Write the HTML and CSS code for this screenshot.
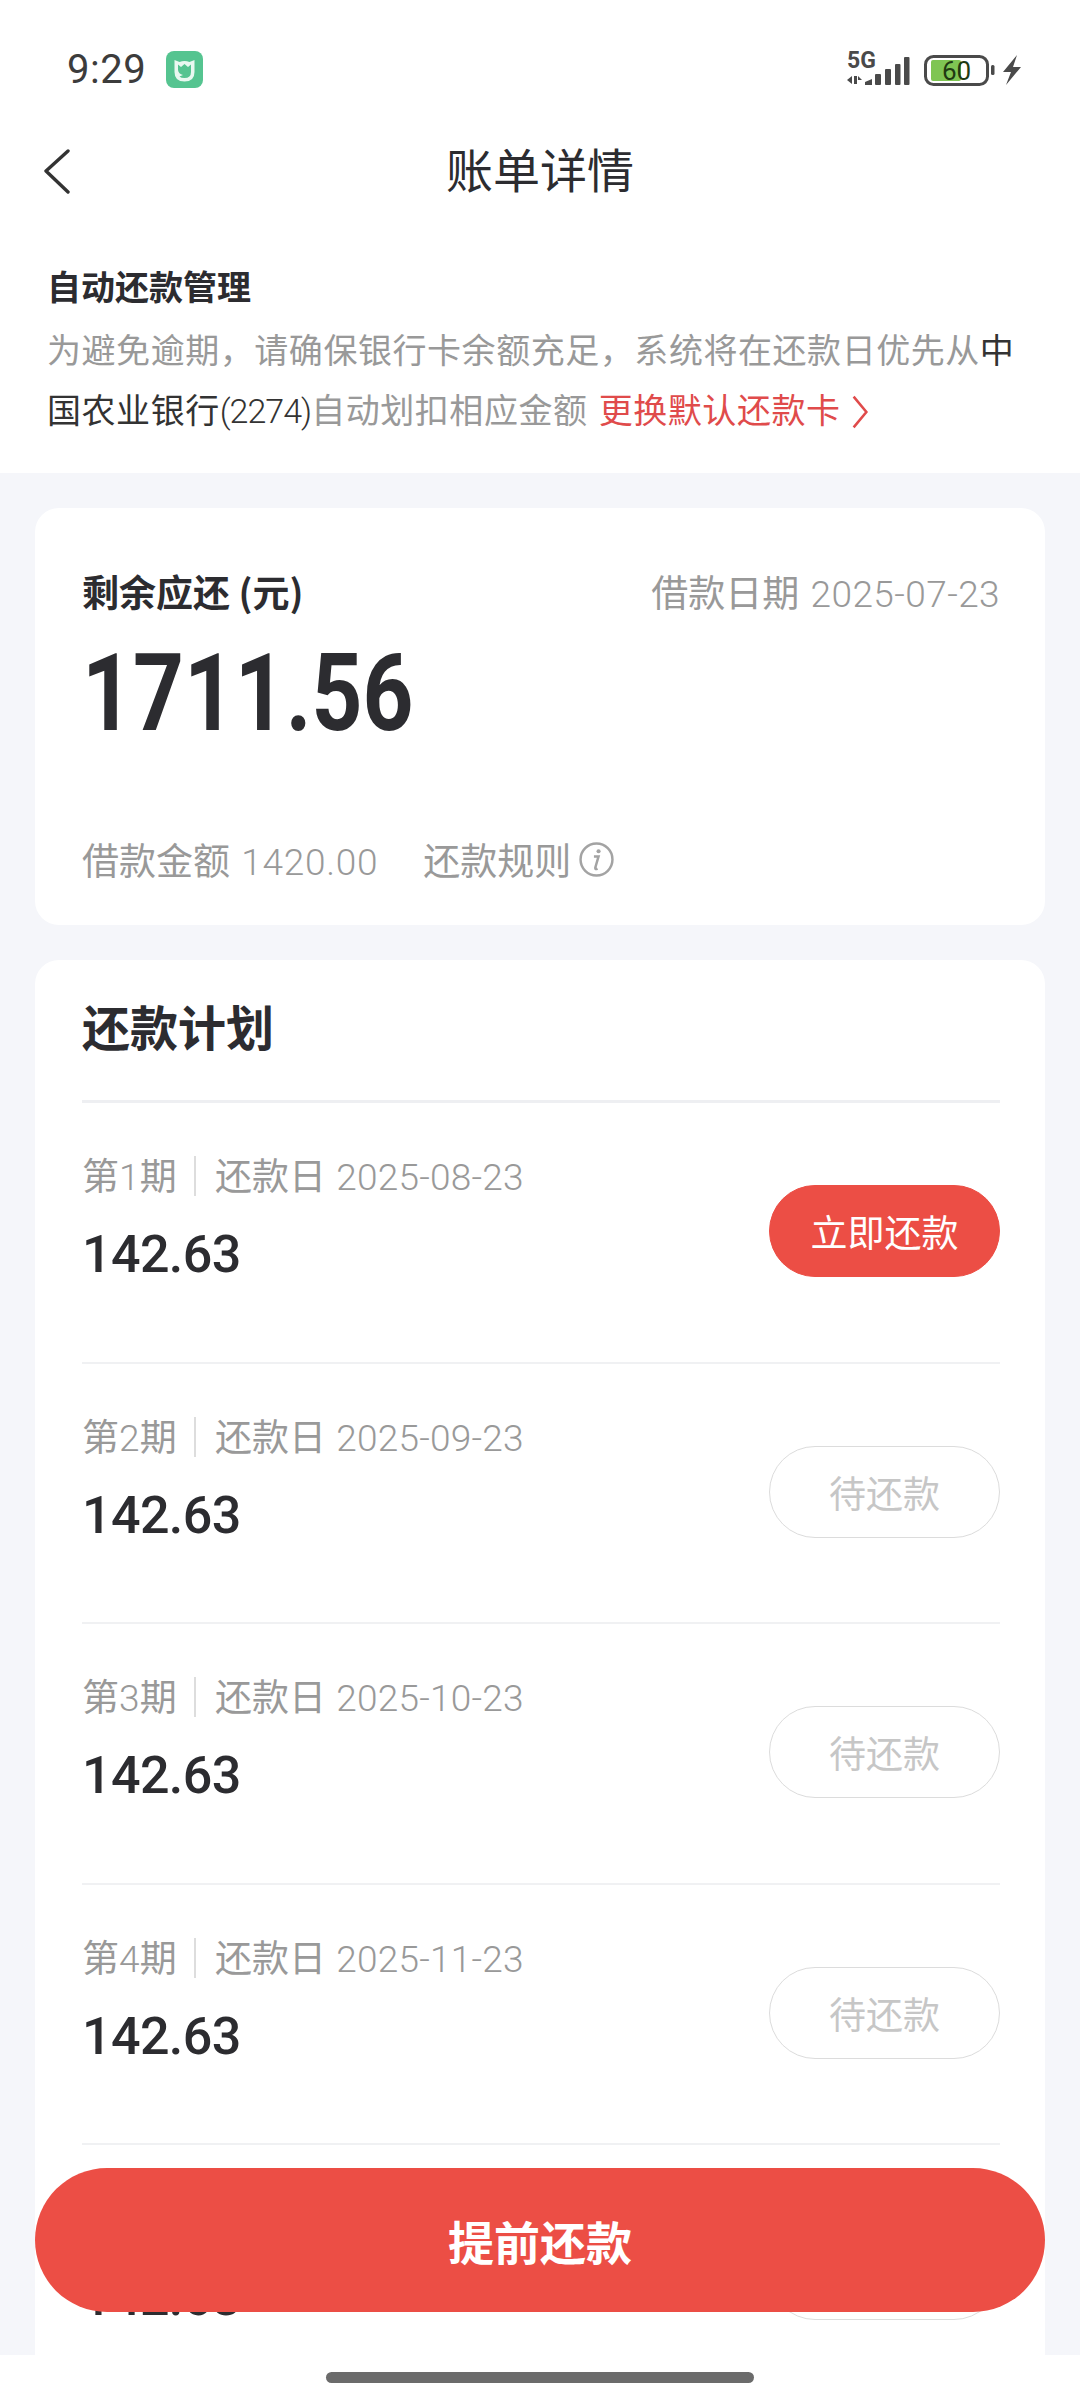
FILE: index.html
```html
<!DOCTYPE html>
<html lang="zh-CN">
<head>
<meta charset="utf-8">
<title>账单详情</title>
<link rel="stylesheet" href="styles.css">
</head>
<body>
<div class="screen">
  <header class="top">
    <div class="status">
      <div class="status-left">
        <span class="time">9:29</span>
        <svg class="app-icon" viewBox="0 0 37 37" aria-hidden="true">
          <rect width="37" height="37" rx="8" fill="#55c490"/>
          <path d="M8.500 9 L13.500 11 Q18.500 9 23.500 11 L28.500 9 V21 Q28.500 30.500 18.500 30.500 Q8.500 30.500 8.500 21 Z" fill="#e9f8f0"/>
          <path d="M12 13.500 L15 16 L18.500 13 L22 16 L25 13.500 V21 Q25 27 18.500 27 Q15 27 13.500 25.500 L17 24 Q12.500 23 12 19 Z" fill="#55c490"/>
        </svg>
      </div>
      <svg class="status-right" viewBox="0 0 190 50" aria-hidden="true">
        <text x="7" y="27" class="sb-5g">5G</text>
        <g fill="#4a4a4a">
          <path d="M7 39 L12 35 V43 Z M14 35 H17 V43 H14 Z M18 35 L22 39 H18 Z"/>
          <path d="M25 41 L32 38 V44 H25 Z"/>
          <rect x="35" y="33" width="6" height="11" rx="1"/>
          <rect x="45" y="28" width="6" height="16" rx="1"/>
          <rect x="55" y="23" width="5.500" height="21" rx="1"/>
          <rect x="64" y="16" width="5.500" height="28" rx="1"/>
        </g>
        <rect x="85.500" y="15.500" width="62" height="28" rx="8" fill="none" stroke="#4a4a4a" stroke-width="3"/>
        <rect x="91" y="19" width="30" height="21" rx="2" fill="#7fc553"/>
        <text x="102" y="39" class="sb-batt">60</text>
        <rect x="151" y="24" width="3.500" height="10" rx="1.500" fill="#4a4a4a"/>
        <path d="M177 14 L163 31 H171 L166 44 L181 26 H173 Z" fill="#4a4a4a"/>
      </svg>
    </div>
    <nav class="nav">
      <svg class="back" viewBox="0 0 26 46" aria-hidden="true"><path d="M24 2 L2 22 L24 43" fill="none" stroke="#333" stroke-width="3.400" stroke-linecap="round" stroke-linejoin="round"/></svg>
      <h1 class="nav-title">账单详情</h1>
    </nav>
    <section class="intro">
      <h2 class="intro-title">自动还款管理</h2>
      <p class="intro-text">为避免逾期，请确保银行卡余额充足，系统将在还款日优先从<span class="bank">中国农业银行<span class="bank-num">(2274)</span></span>自动划扣相应金额 <span class="change">更换默认还款卡<svg class="change-arrow" viewBox="0 0 16 32" aria-hidden="true"><path d="M2 1.500 L14 16 L2 30.500" fill="none" stroke="#e04b4b" stroke-width="2.400"/></svg></span></p>
    </section>
  </header>

  <main class="main">
    <section class="card summary">
      <div class="summary-head">
        <span class="summary-label">剩余应还 (元)</span>
        <span class="muted">借款日期 <span class="num">2025-07-23</span></span>
      </div>
      <div class="summary-amount"><span class="amount-text">1711.56</span></div>
      <div class="summary-foot">
        <span class="muted">借款金额 <span class="num num-wide">1420.00</span></span>
        <span class="muted rule">还款规则
          <svg class="info" viewBox="0 0 34 34" aria-hidden="true"><circle cx="17" cy="17" r="15.500" fill="none" stroke="#a3a3a3" stroke-width="2.400"/><circle cx="19" cy="9" r="2" fill="#a3a3a3"/><path d="M14.500 14 H19 L15.800 25 Q15.500 27 18 25.800" fill="none" stroke="#a3a3a3" stroke-width="2.400"/></svg>
        </span>
      </div>
    </section>

    <section class="card plan">
      <h2 class="plan-title">还款计划</h2>
      <div class="row">
        <div class="row-info">
          <div class="row-meta"><span class="term">第<span class="num">1</span>期</span><span class="sep"></span><span>还款日 <span class="num">2025-08-23</span></span></div>
          <div class="row-amount">142.63</div>
        </div>
        <div class="pill pill-active">立即还款</div>
      </div>
      <div class="row">
        <div class="row-info">
          <div class="row-meta"><span class="term">第<span class="num">2</span>期</span><span class="sep"></span><span>还款日 <span class="num">2025-09-23</span></span></div>
          <div class="row-amount">142.63</div>
        </div>
        <div class="pill">待还款</div>
      </div>
      <div class="row">
        <div class="row-info">
          <div class="row-meta"><span class="term">第<span class="num">3</span>期</span><span class="sep"></span><span>还款日 <span class="num">2025-10-23</span></span></div>
          <div class="row-amount">142.63</div>
        </div>
        <div class="pill">待还款</div>
      </div>
      <div class="row">
        <div class="row-info">
          <div class="row-meta"><span class="term">第<span class="num">4</span>期</span><span class="sep"></span><span>还款日 <span class="num">2025-11-23</span></span></div>
          <div class="row-amount">142.63</div>
        </div>
        <div class="pill">待还款</div>
      </div>
      <div class="row">
        <div class="row-info">
          <div class="row-meta"><span class="term">第<span class="num">5</span>期</span><span class="sep"></span><span>还款日 <span class="num">2025-12-23</span></span></div>
          <div class="row-amount">142.63</div>
        </div>
        <div class="pill">待还款</div>
      </div>
    </section>
  </main>

  <div class="prepay">提前还款</div>
  <footer class="home"><span class="home-bar"></span></footer>
</div>
</body>
</html>
```

FILE: styles.css
```css
* { box-sizing: border-box; }
html, body { margin: 0; padding: 0; }
body {
  width: 1080px;
  height: 2400px;
  overflow: hidden;
  background: #fff;
  color: #2c2c30;
  font-family: "Noto Sans CJK SC", "Noto Sans", sans-serif;
}
h1, h2, p { margin: 0; font-weight: normal; }

.screen {
  position: relative;
  display: flex;
  flex-direction: column;
  width: 1080px;
  height: 2400px;
  overflow: hidden;
}

.top { flex: none; background: #fff; }

.status {
  display: flex;
  justify-content: space-between;
  align-items: center;
  height: 131px;
  padding: 0 50px 0 67px;
}
.status-left { display: flex; align-items: center; gap: 20px; margin-top: 8px; }
.time { font-family: Roboto, sans-serif; font-size: 40px; color: #3c3c3c; line-height: 44px; letter-spacing: 0.5px; }
.app-icon { width: 37px; height: 37px; }
.status-right { width: 190px; height: 50px; }
.sb-5g { font-family: Roboto, sans-serif; font-size: 23px; font-weight: 700; fill: #4a4a4a; }
.sb-batt { font-family: Roboto, sans-serif; font-size: 26px; fill: #1f3a12; }

.nav {
  position: relative;
  display: flex;
  align-items: center;
  justify-content: center;
  height: 80px;
}
.back { position: absolute; left: 44px; top: 18px; width: 26px; height: 46px; }
.nav-title { font-size: 47px; line-height: 74px; margin-bottom: 6px; color: #2c2c30; }

.intro { padding: 45px 50px 32px 47px; }
.intro-title { font-size: 34px; font-weight: 700; line-height: 60px; color: #2c2c30; }
.intro-text { margin-top: 3px; font-size: 34px; line-height: 60px; color: #999; letter-spacing: 0.55px; }
.bank { color: #333; }
.bank-num { font-family: Roboto, sans-serif; font-weight: 300; letter-spacing: -1px; }
.change { margin-left: 3px; color: #e04b4b; }
.change-arrow { width: 18px; height: 34px; margin-left: 10px; vertical-align: -6px; }

.main {
  flex: 1;
  min-height: 0;
  overflow: hidden;
  display: flex;
  flex-direction: column;
  gap: 35px;
  padding: 35px 35px 0;
  background: #f5f6fa;
}

.card { flex: none; background: #fff; border-radius: 24px; }

.summary { height: 417px; padding: 58px 45px 0 47px; }
.summary-head { display: flex; justify-content: space-between; align-items: center; height: 50px; }
.summary-label { font-size: 37px; font-weight: 700; color: #2c2c30; }
.muted { font-size: 37px; color: #999; }
.num { font-family: Roboto, sans-serif; font-weight: 300; letter-spacing: 0.4px; margin-left: 3px; }
.row-meta .num { letter-spacing: 0.2px; margin-left: 2px; }
.row-meta .term .num { margin-left: 0; }
.num-wide { letter-spacing: 0.7px; }
.summary-amount {
  margin-top: 18px;
  font-family: Roboto, sans-serif;
  font-weight: 700;
  font-size: 107px;
  line-height: 120px;
  color: #2c2c30;
}
.amount-text { display: inline-block; transform: scaleX(0.83); transform-origin: left center; }
.summary-foot { display: flex; align-items: center; gap: 45px; height: 50px; margin-top: 80px; }
.rule { display: flex; align-items: center; gap: 8px; }
.info { width: 35px; height: 35px; }

.plan { padding: 0 45px 0 47px; }
.plan-title { height: 143px; border-bottom: 3px solid #eeeff2; font-size: 48px; font-weight: 700; line-height: 130px; color: #2c2c30; }

.row {
  display: flex;
  justify-content: space-between;
  align-items: center;
  height: 260.600px;
  padding-bottom: 2px;
  border-bottom: 2px solid #f0f1f3;
}
.row-info { display: flex; flex-direction: column; gap: 20px; padding-bottom: 26px; }
.row-meta { display: flex; align-items: center; font-size: 37px; line-height: 50px; color: #999; }
.term { width: 112px; }
.sep { width: 2px; height: 40px; background: #ddd; margin-right: 19px; }
.row-amount { font-family: Roboto, sans-serif; font-weight: 500; font-size: 52px; line-height: 64px; color: #2c2c30; letter-spacing: -0.600px; }

.pill {
  flex: none;
  display: flex;
  align-items: center;
  justify-content: center;
  width: 231px;
  height: 92px;
  border: 1.500px solid #dcdcdc;
  border-radius: 46px;
  font-size: 37px;
  color: #c6c6c6;
}
.pill-active { background: #ec4e45; border-color: #ec4e45; color: #fff; }

.prepay {
  position: absolute;
  left: 35px;
  top: 2168px;
  display: flex;
  align-items: center;
  justify-content: center;
  width: 1010px;
  height: 144px;
  border-radius: 72px;
  background: #ec4e45;
  color: #fff;
  font-size: 46px;
  font-weight: 700;
}

.home { flex: none; display: flex; justify-content: center; height: 45px; padding-top: 17px; background: #fff; }
.home-bar { width: 428px; height: 11px; border-radius: 6px; background: #6b6b6b; }
```
